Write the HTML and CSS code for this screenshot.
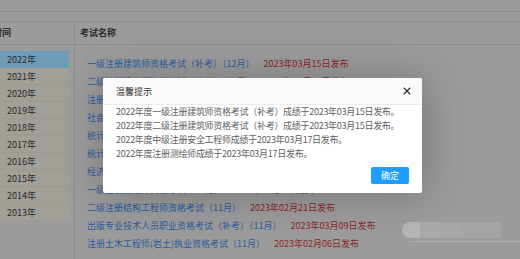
FILE: index.html
```html
<!DOCTYPE html>
<html lang="zh-CN">
<head>
<meta charset="utf-8">
<link rel="stylesheet" href="styles.css">
</head>
<body>
<div class="page">
  <div class="topbar"><span class="crumb">职业资格考试</span></div>
  <div class="band"></div>
  <div class="thead">
    <div class="th th-year">时间</div>
    <div class="th th-name">考试名称</div>
  </div>
  <div class="tbody">
    <ul class="years">
      <li class="year active">2022年</li>
      <li class="year">2021年</li>
      <li class="year">2020年</li>
      <li class="year">2019年</li>
      <li class="year">2018年</li>
      <li class="year">2017年</li>
      <li class="year">2016年</li>
      <li class="year">2015年</li>
      <li class="year">2014年</li>
      <li class="year">2013年</li>
    </ul>
    <ul class="exams">
      <li class="exam"><a class="name">一级注册建筑师资格考试（补考）（12月）</a><span class="date">2023年03月15日发布</span></li>
      <li class="exam"><a class="name">二级注册建筑师资格考试（补考）（12月）</a><span class="date">2023年03月15日发布</span></li>
      <li class="exam"><a class="name">注册安全工程师职业资格考试（中级）</a><span class="date">2023年03月17日发布</span></li>
      <li class="exam"><a class="name">社会工作者职业水平考试（11月）</a><span class="date">2023年02月20日发布</span></li>
      <li class="exam"><a class="name">统计专业技术资格考试（中级）</a><span class="date">2023年02月16日发布</span></li>
      <li class="exam"><a class="name">统计专业技术资格考试（初级）</a><span class="date">2023年02月16日发布</span></li>
      <li class="exam"><a class="name">经济专业技术资格考试（11月）</a><span class="date">2023年02月10日发布</span></li>
      <li class="exam"><a class="name">一级注册测绘师资格考试（11月）</a><span class="date">2023年03月17日发布</span></li>
      <li class="exam"><a class="name">二级注册结构工程师资格考试（11月）</a><span class="date">2023年02月21日发布</span></li>
      <li class="exam"><a class="name">出版专业技术人员职业资格考试（补考）（11月）</a><span class="date">2023年03月09日发布</span></li>
      <li class="exam"><a class="name">注册土木工程师(岩土)执业资格考试（11月）</a><span class="date">2023年02月06日发布</span></li>
    </ul>
  </div>
</div>

<div class="float-widget">
  <div class="fw-cap"></div>
  <div class="fw-seg s1"></div>
  <div class="fw-seg s2"></div>
  <div class="fw-seg s3"></div>
  <div class="fw-line"></div>
</div>

<div class="dialog">
  <div class="dialog-head">
    <span class="dialog-title">温馨提示</span>
    <svg class="dialog-close" width="8" height="8" viewBox="0 0 8 8"><path d="M0.8 0.8 L7.2 7.2 M7.2 0.8 L0.8 7.2" stroke="#333" stroke-width="1.3" fill="none"/></svg>
  </div>
  <div class="dialog-body">
    <p>2022年度一级注册建筑师资格考试（补考）成绩于2023年03月15日发布。</p>
    <p>2022年度二级注册建筑师资格考试（补考）成绩于2023年03月15日发布。</p>
    <p>2022年度中级注册安全工程师成绩于2023年03月17日发布。</p>
    <p>2022年度注册测绘师成绩于2023年03月17日发布。</p>
  </div>
  <div class="dialog-foot">
    <button class="btn-ok">确定</button>
  </div>
</div>
</body>
</html>
```

FILE: styles.css
```css
* { box-sizing: border-box; }
html, body {
  margin: 0;
  padding: 0;
  width: 520px;
  height: 259px;
  overflow: hidden;
  background: #9b9b9b;
  font-family: "Noto Sans CJK SC", "Noto Sans", sans-serif;
  font-size: 9px;
}
ul { list-style: none; margin: 0; padding: 0; }
p { margin: 0; }

.page { width: 520px; }

.topbar {
  height: 12px;
  border-bottom: 1px solid #8d8d8d;
  padding-left: 10px;
  overflow: hidden;
}
.crumb {
  display: block;
  color: #3a3a3a;
  line-height: 10px;
  margin-top: -9px;
}
.band {
  height: 10px;
  border-bottom: 1px solid #8d8d8d;
}
.thead {
  display: grid;
  grid-template-columns: 75px 1fr;
  height: 23px;
  border-bottom: 1px solid #8d8d8d;
}
.th {
  line-height: 22px;
  font-weight: bold;
  color: #2a2a2a;
}
.th-year {
  border-right: 1px solid #8d8d8d;
  text-indent: -7px;
  overflow: hidden;
}
.th-name { padding-left: 5px; }

.tbody {
  display: grid;
  grid-template-columns: 75px 1fr;
}
.years {
  border-right: 1px solid #8d8d8d;
  padding-top: 6px;
  padding-right: 5px;
  padding-bottom: 40px;
}
.year {
  height: 17px;
  line-height: 17px;
  padding-left: 7px;
  background: #a29e98;
  color: #2a2a2a;
  border-bottom: 1px solid #9c9893;
}
.year.active {
  background: #6e9cb8;
  border-bottom-color: #6e9cb8;
}
.exams {
  padding-top: 10px;
  padding-left: 12px;
}
.exam {
  height: 18px;
  line-height: 18px;
  white-space: nowrap;
}
.name { color: #2b5c9d; }
.date { color: #8a2626; margin-left: 9px; }

.float-widget {
  position: absolute;
  left: 402px;
  top: 222px;
  width: 118px;
  height: 21px;
}
.fw-cap {
  position: absolute;
  left: 0; top: 0;
  width: 18px; height: 16px;
  background: #b5b5b5;
  border-radius: 8px 0 0 8px;
}
.fw-seg { position: absolute; top: 0; height: 16px; }
.s1 { left: 18px; width: 20px; background: #a9a9a9; }
.s2 { left: 38px; width: 20px; background: #a7a7a7; }
.s3 { left: 58px; width: 41px; background: #a5a5a5; }
.fw-line {
  position: absolute;
  left: 8px; top: 19px;
  width: 110px; height: 1px;
  background: #adadad;
}

.dialog {
  position: absolute;
  left: 103px;
  top: 78px;
  width: 319px;
  height: 115px;
  background: #fff;
  box-shadow: 1px 1px 40px rgba(0,0,0,0.25);
  border-radius: 2px;
}
.dialog-head {
  height: 27px;
  border-bottom: 1px solid #ececec;
  background: #fafafa;
  display: flex;
  align-items: center;
  justify-content: space-between;
  padding: 0 11px 0 13px;
  border-radius: 2px 2px 0 0;
}
.dialog-title { color: #333; }
.dialog-close { display: block; }
.dialog-body {
  padding: 0 12px 0 13px;
  color: #606060;
  line-height: 14px;
  height: 56px;
  letter-spacing: -0.28px;
  white-space: nowrap;
}
.dialog-foot {
  display: flex;
  justify-content: flex-end;
  padding: 6px 13px 0 0;
}
.btn-ok {
  width: 38px;
  height: 17px;
  border: 0;
  border-radius: 2px;
  background: #1e9fff;
  color: #fff;
  font-family: inherit;
  font-size: 9px;
  padding: 0;
  line-height: 17px;
}
```
